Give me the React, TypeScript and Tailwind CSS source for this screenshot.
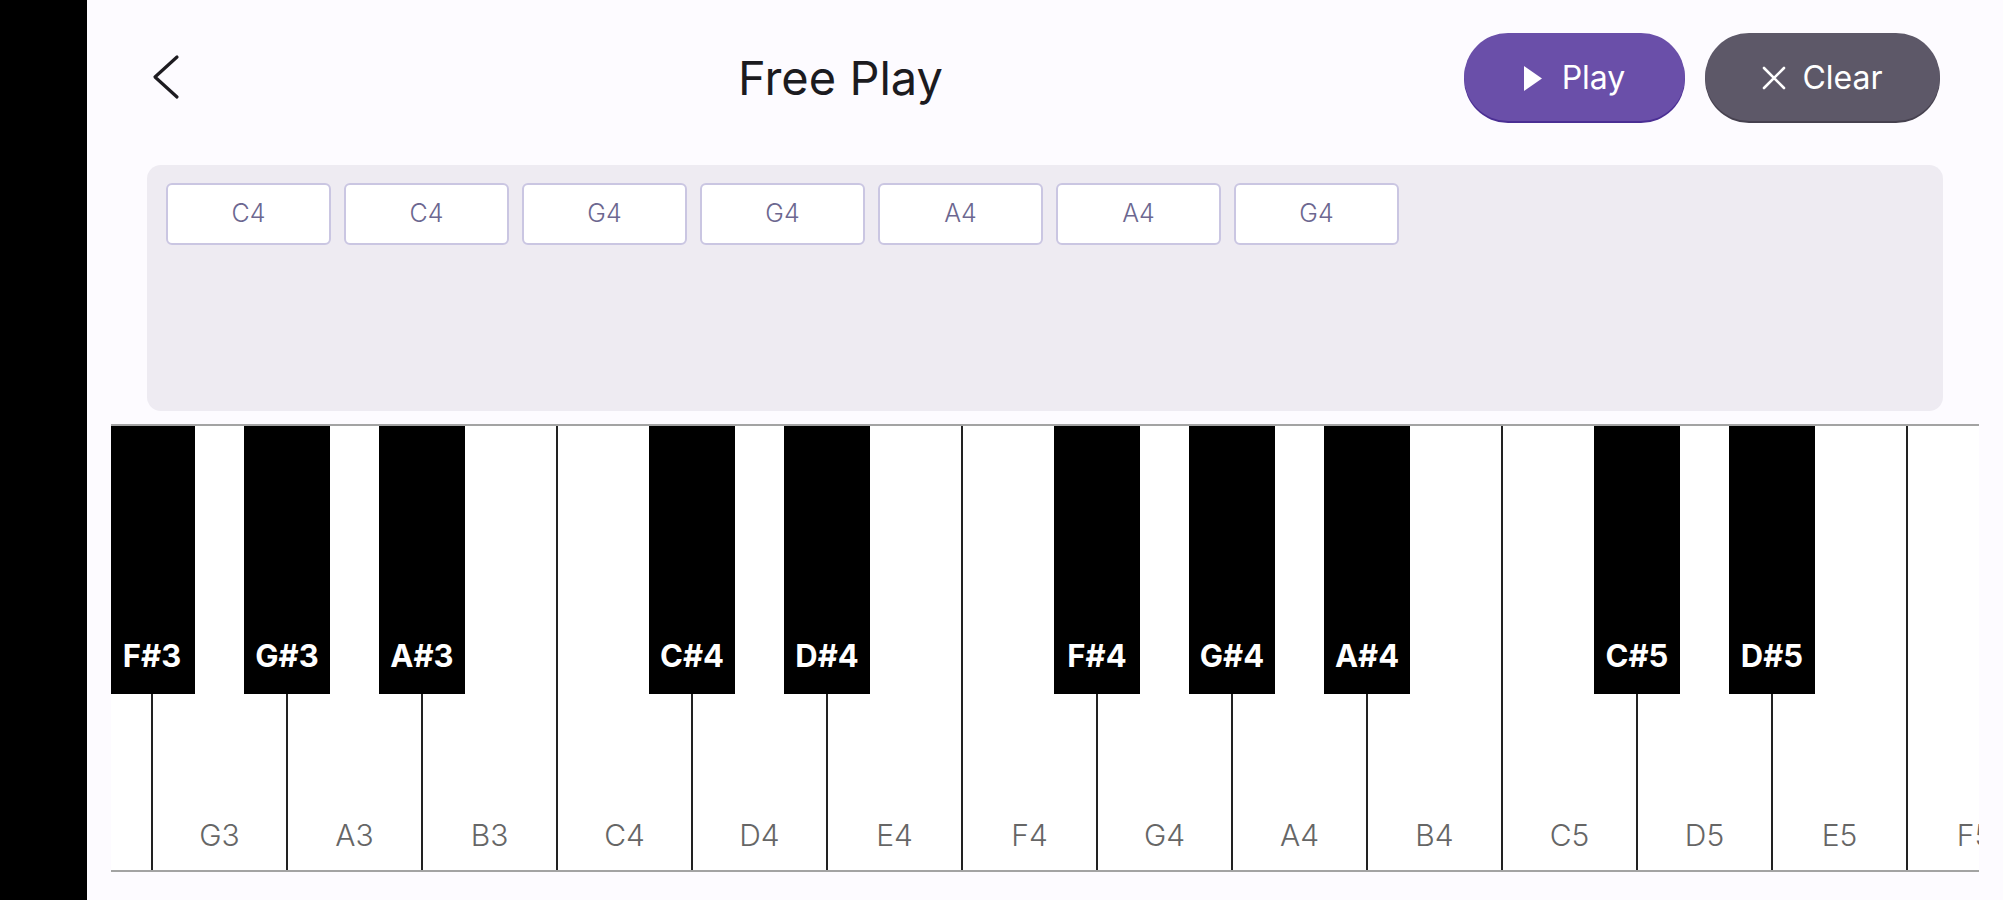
import React from 'react';

// 鍵盤データ（F3 から右へ。左端は少しスクロールされた状態）
const whiteKeys: { note: string; sharp?: string; hideLabel?: boolean }[] = [
  { note: 'F3', sharp: 'F#3', hideLabel: true },
  { note: 'G3', sharp: 'G#3' },
  { note: 'A3', sharp: 'A#3' },
  { note: 'B3' },
  { note: 'C4', sharp: 'C#4' },
  { note: 'D4', sharp: 'D#4' },
  { note: 'E4' },
  { note: 'F4', sharp: 'F#4' },
  { note: 'G4', sharp: 'G#4' },
  { note: 'A4', sharp: 'A#4' },
  { note: 'B4' },
  { note: 'C5', sharp: 'C#5' },
  { note: 'D5', sharp: 'D#5' },
  { note: 'E5' },
  { note: 'F5' },
];

const recorded = ['C4', 'C4', 'G4', 'G4', 'A4', 'A4', 'G4'];

const WhiteKey: React.FC<{ note: string; sharp?: string; hideLabel?: boolean }> = ({ note, sharp, hideLabel }) => (
  <div className="relative flex h-full w-[135px] shrink-0 flex-col items-center justify-end border-r-2 border-[#222222] bg-white pb-[20px]">
    {!hideLabel && <span className="text-[30px] font-light leading-none text-[#666666]">{note}</span>}
    {sharp && (
      <div className="absolute right-[-44px] top-0 z-10 flex h-[268px] w-[86px] flex-col items-center justify-end bg-black pb-[23px]">
        <span className="text-[31px] font-bold leading-none text-white">{sharp}</span>
      </div>
    )}
  </div>
);

export default function App(): JSX.Element {
  return (
    <div
      className="flex h-[900px] w-full overflow-hidden bg-[#fdfbff]"
      style={{ fontFamily: 'Inter, "Noto Sans", sans-serif' }}
    >
      <div className="w-[87px] shrink-0 bg-black" />

      <div className="flex min-w-0 flex-1 flex-col">
        <header className="mt-[33px] flex h-[88px] items-center pl-[60px] pr-[63px]">
          <button type="button" className="flex h-[60px] w-[70px] items-center">
            <svg width="30" height="46" viewBox="0 0 30 46" className="ml-[4px]" fill="none">
              <polyline
                points="26,3 4,23 26,43"
                stroke="#1d1b20"
                strokeWidth="3.2"
                strokeLinecap="round"
                strokeLinejoin="round"
              />
            </svg>
          </button>
          <h1 className="flex-1 pt-[3px] text-center text-[47px] font-normal text-[#1c1b1f]">Free Play</h1>
          <div className="flex gap-[20px]">
            <button
              type="button"
              className="flex h-[88px] w-[221px] items-center justify-center gap-[20px] rounded-full bg-[#6a4fa9] pt-[2px] text-white shadow-[0_2px_0_#4b2f94]"
            >
              <svg width="18" height="25" viewBox="0 0 18 25">
                <polygon points="0,0 18,12.5 0,25" fill="white" />
              </svg>
              <span className="text-[32px] leading-none">Play</span>
            </button>
            <button
              type="button"
              className="flex h-[88px] w-[235px] items-center justify-center gap-[16px] rounded-full bg-[#5d5868] pt-[2px] text-white shadow-[0_2px_0_#46414f]"
            >
              <svg width="24" height="24" viewBox="0 0 24 24">
                <path d="M2 2 L22 22 M22 2 L2 22" stroke="white" strokeWidth="2.6" strokeLinecap="round" />
              </svg>
              <span className="text-[32px] leading-none">Clear</span>
            </button>
          </div>
        </header>

        <section className="mx-[60px] mt-[44px] flex h-[246px] items-start gap-[13px] rounded-[14px] bg-[#eeebf2] px-[19px] pt-[18px]">
          {recorded.map((n, i) => (
            <div
              key={i}
              className="flex h-[62px] w-[165px] items-center justify-center rounded-[6px] border-2 border-[#cac6e2] bg-white text-[25px] font-light text-[#6c6790]"
            >
              {n}
            </div>
          ))}
        </section>

        <div className="relative mx-[24px] mt-[13px] h-[448px] overflow-hidden border-y-2 border-[#a3a3a3] bg-white">
          <div className="-ml-[93px] flex h-full">
            {whiteKeys.map((k) => (
              <WhiteKey key={k.note} note={k.note} sharp={k.sharp} hideLabel={k.hideLabel} />
            ))}
          </div>
        </div>
      </div>
    </div>
  );
}
